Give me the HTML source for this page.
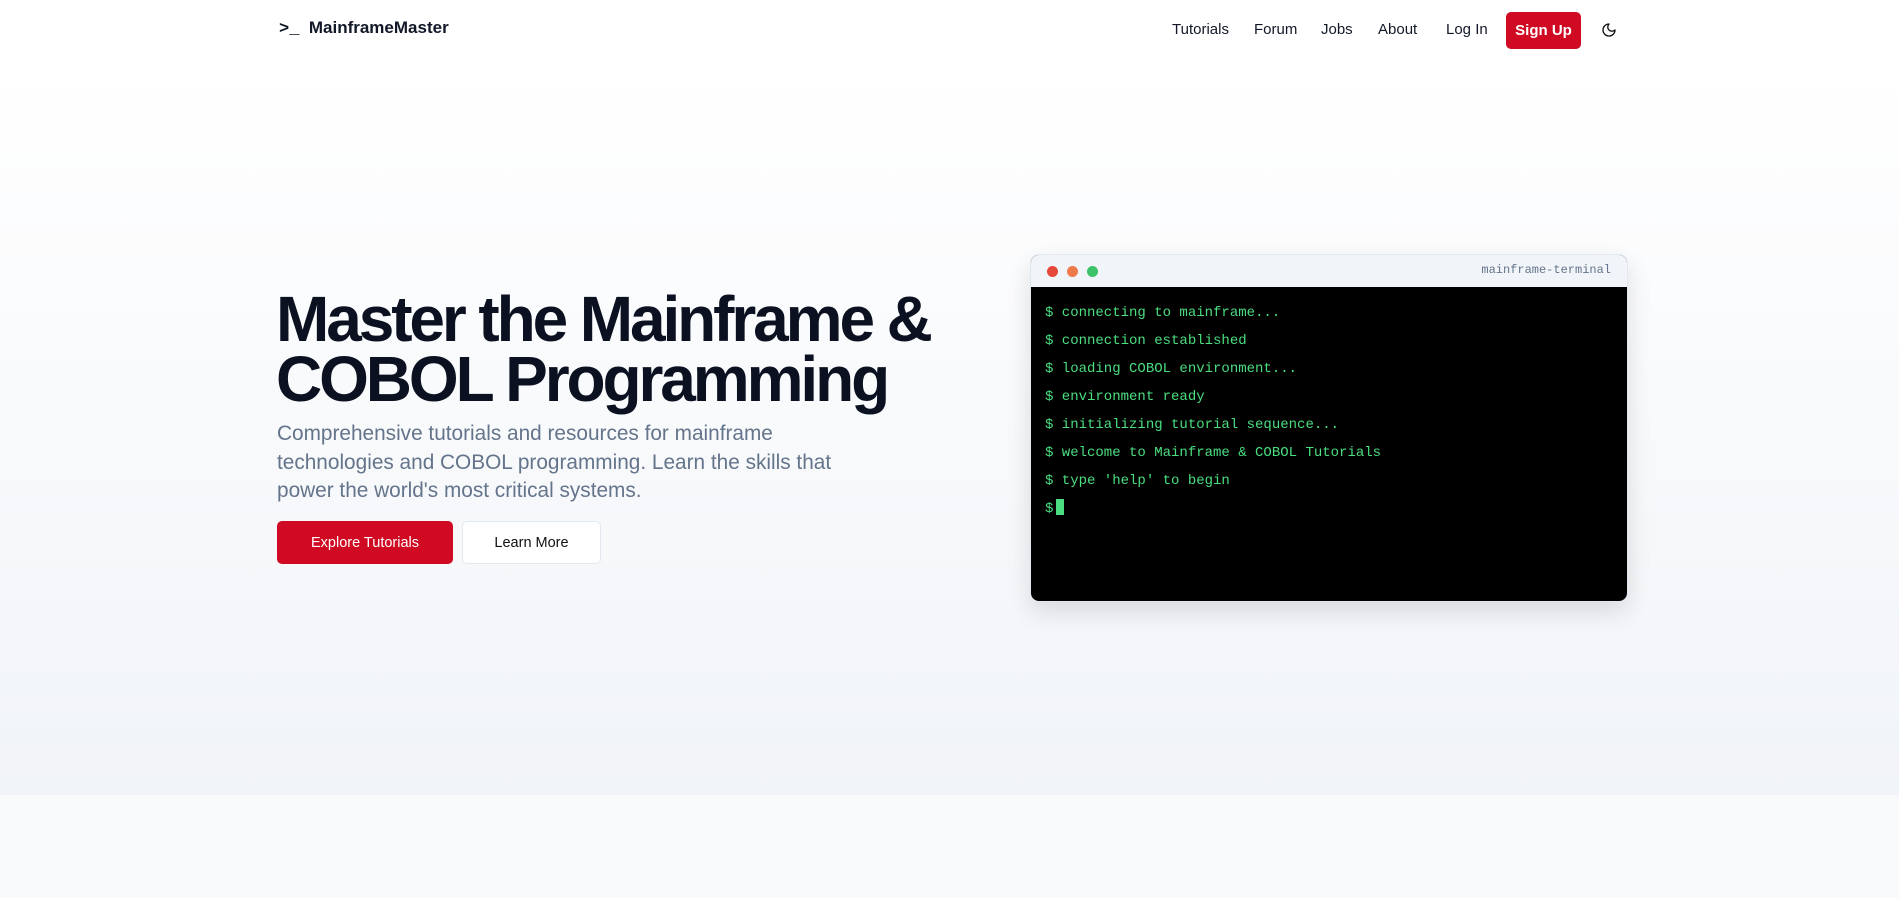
<!DOCTYPE html>
<html><head><meta charset="utf-8"><style>
*{box-sizing:border-box;margin:0;padding:0}
body{width:1899px;height:898px;overflow:hidden;font-family:"Liberation Sans",sans-serif;background:#f8fafc;position:relative}
.hero{position:absolute;left:0;top:0;width:1899px;height:795px;background:linear-gradient(#fff 0%,#fff 8%,#f1f4f8 100%)}
.nav a{position:absolute;top:21px;font-size:15px;color:#111827;text-decoration:none}
.logo{position:absolute;left:279px;top:18px;font-weight:bold;font-size:17px;color:#111827}
h1{position:absolute;left:276px;top:289px;font-size:64px;line-height:60px;font-weight:bold;color:#0b1120;letter-spacing:-3.1px;white-space:nowrap}
p.sub{position:absolute;left:277px;top:420px;width:600px;font-size:20.8px;line-height:28.5px;color:#64748b}
.btn{position:absolute;top:521px;height:43px;border-radius:5px;font-size:14.5px;display:flex;align-items:center;justify-content:center}
.term{position:absolute;left:1030px;top:254px;width:598px;height:348px;border-radius:9px;background:#000;box-shadow:0 10px 25px rgba(0,0,0,.12);overflow:hidden;border:1px solid #e2e8f0}
.th{height:32px;background:#f1f5f9;position:relative}
.dot{position:absolute;top:11px;width:11px;height:11px;border-radius:50%}
.tb{padding:12px 0 0 14px;font-family:"Liberation Mono",monospace;font-size:14px;color:#4ade80;line-height:28px}
</style></head><body>
<div class="hero"></div>
<div class="logo"><span style="font-family:'Liberation Mono',monospace;font-weight:bold">&gt;_</span>&nbsp; MainframeMaster</div>
<div class="nav">
<a style="left:1172px">Tutorials</a><a style="left:1254px">Forum</a><a style="left:1321px">Jobs</a><a style="left:1378px">About</a><a style="left:1446px">Log In</a>
</div>
<div style="position:absolute;left:1506px;top:12px;width:75px;height:37px;background:#cf0a22;border-radius:5px;color:#fff;font-weight:bold;font-size:15px;display:flex;align-items:center;justify-content:center">Sign Up</div>
<svg style="position:absolute;left:1601px;top:22px" width="16" height="16" viewBox="0 0 24 24" fill="none" stroke="#111" stroke-width="2" stroke-linecap="round" stroke-linejoin="round"><path d="M12 3a6 6 0 0 0 9 9 9 9 0 1 1-9-9Z"/></svg>
<h1>Master the Mainframe &amp;<br>COBOL Programming</h1>
<p class="sub">Comprehensive tutorials and resources for mainframe technologies and COBOL programming. Learn the skills that power the world's most critical systems.</p>
<div class="btn" style="left:277px;width:176px;background:#cf0a22;color:#fff">Explore Tutorials</div>
<div class="btn" style="left:462px;width:139px;background:#fff;border:1px solid #e2e8f0;color:#111">Learn More</div>
<div class="term"><div class="th">
<div class="dot" style="left:16px;background:#e5483b"></div><div class="dot" style="left:36px;background:#ee7a4c"></div><div class="dot" style="left:56px;background:#3cc268"></div>
<span style="position:absolute;right:16px;top:8px;font-family:'Liberation Mono',monospace;font-size:12px;color:#64748b">mainframe-terminal</span></div>
<div class="tb">$ connecting to mainframe...<br>$ connection established<br>$ loading COBOL environment...<br>$ environment ready<br>$ initializing tutorial sequence...<br>$ welcome to Mainframe &amp; COBOL Tutorials<br>$ type 'help' to begin<br>$ <span style="display:inline-block;width:8px;height:16px;background:#4ade80;vertical-align:-3px;margin-left:-6px"></span></div>
</div>
</body></html>
